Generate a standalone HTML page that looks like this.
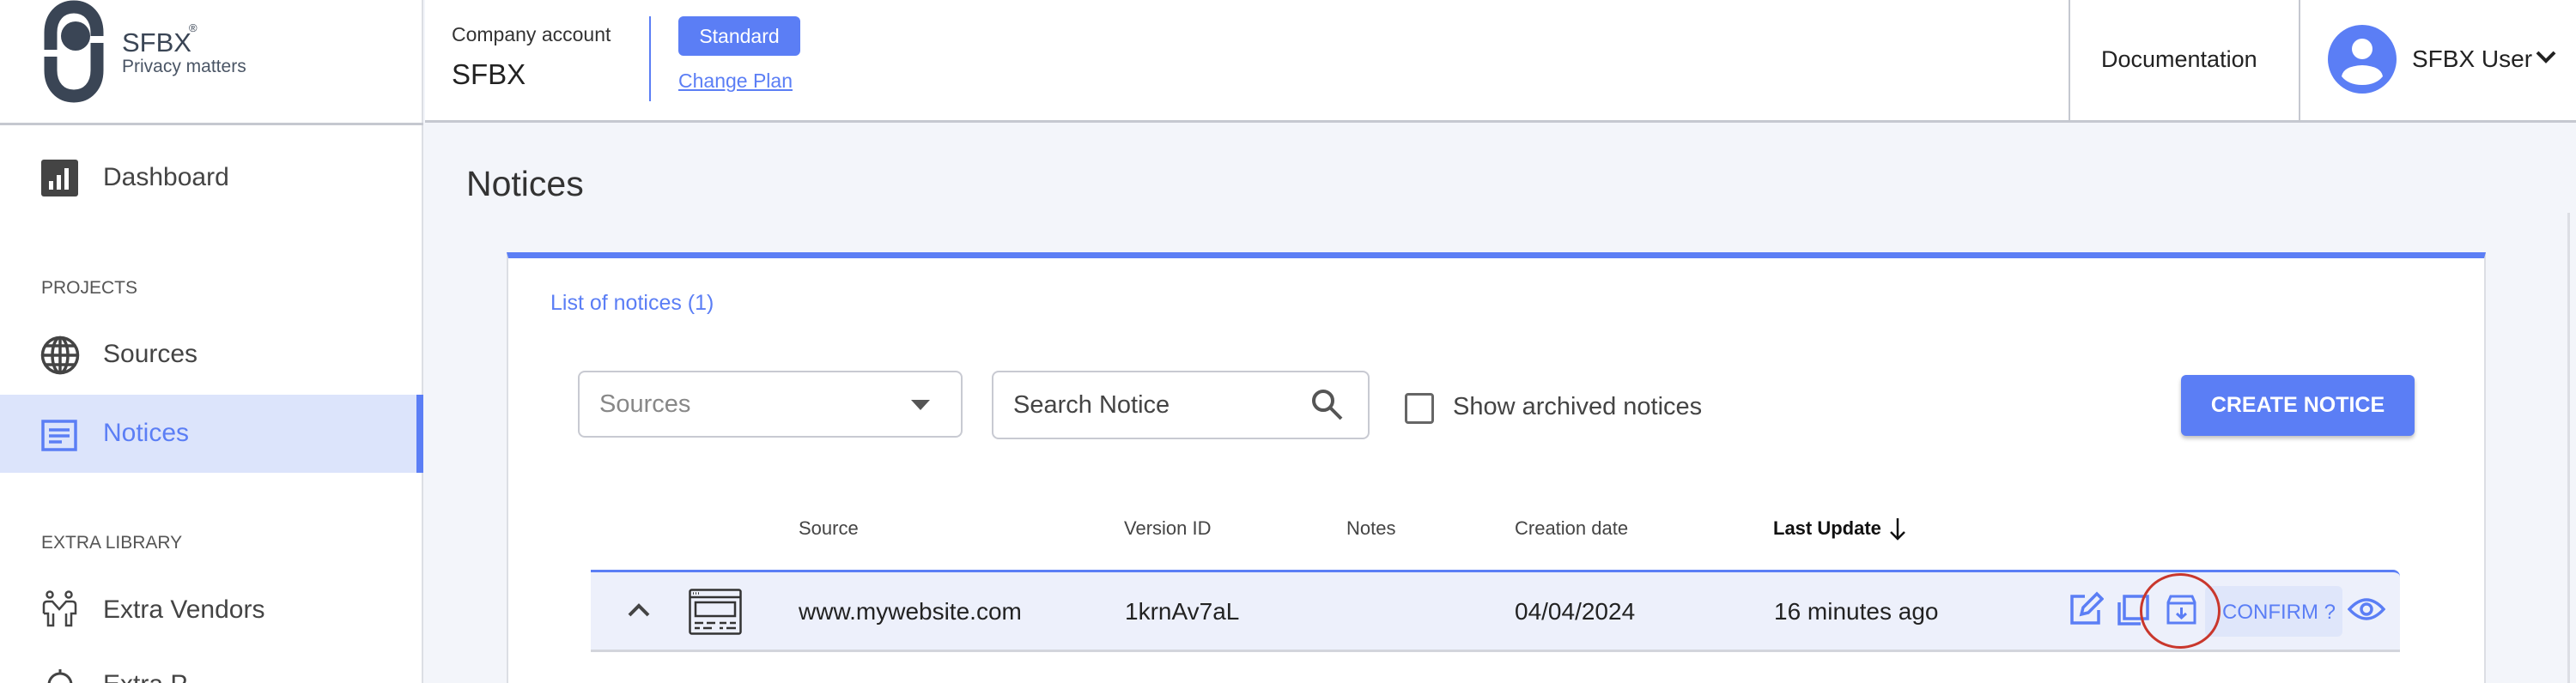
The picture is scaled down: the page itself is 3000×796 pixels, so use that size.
<!DOCTYPE html>
<html><head><meta charset="utf-8"><style>
*{margin:0;padding:0;box-sizing:border-box}
html,body{width:3000px;height:796px;overflow:hidden}
body{background:#f3f5fa;font-family:"Liberation Sans",sans-serif;color:#3c3c3c;position:relative}
.abs{position:absolute}
.t{position:absolute;white-space:nowrap;line-height:1}
</style></head><body>
<!-- sidebar -->
<div class="abs" style="left:0;top:0;width:493px;height:796px;background:#fff;border-right:2px solid #dcdee4"></div>
<div class="abs" style="left:0;top:143px;width:493px;height:3px;background:#c5c8d0"></div>
<!-- logo -->
<svg class="abs" style="left:48px;top:0" width="76" height="120" viewBox="0 0 76 120" fill="none" stroke="#3a4555" stroke-width="15">
<path d="M11 58 L11 38 C11 20 22 8 38 8 C54 8 65 20 65 38 L65 42"/>
<path d="M65 50 L65 82 C65 100 54 112 38 112 C22 112 11 100 11 82 L11 66"/>
<circle cx="40" cy="42" r="17" fill="#3a4555" stroke="none"/>
</svg>
<div class="t" style="left:142px;top:34px;font-size:31px;color:#3a4555">SFBX</div>
<div class="t" style="left:220px;top:26px;font-size:13px;color:#3a4555">®</div>
<div class="t" style="left:142px;top:67px;font-size:21px;color:#4a5565">Privacy matters</div>

<!-- dashboard -->
<div class="abs" style="left:48px;top:186px;width:43px;height:43px;background:#444;border-radius:3px"></div>
<div class="abs" style="left:57px;top:211px;width:5px;height:10px;background:#fff"></div>
<div class="abs" style="left:66px;top:204px;width:5px;height:17px;background:#fff"></div>
<div class="abs" style="left:75px;top:196px;width:5px;height:25px;background:#fff"></div>
<div class="t" style="left:120px;top:192px;font-size:30px;color:#444">Dashboard</div>
<div class="t" style="left:48px;top:325px;font-size:21px;color:#555">PROJECTS</div>
<svg class="abs" style="left:47px;top:391px" width="46" height="46" viewBox="0 0 46 46" fill="none" stroke="#444" stroke-width="3.5">
<circle cx="23" cy="23" r="20.5"/><ellipse cx="23" cy="23" rx="9" ry="20.5"/><line x1="23" y1="2" x2="23" y2="44"/><line x1="2.5" y1="23" x2="43.5" y2="23"/><path d="M6 12H40M6 34H40"/></svg>
<div class="t" style="left:120px;top:398px;font-size:30px;color:#444">Sources</div>
<div class="abs" style="left:0;top:460px;width:493px;height:91px;background:#dce4fb;border-right:8px solid #5b7ef5"></div>
<svg class="abs" style="left:48px;top:489px" width="42" height="37" viewBox="0 0 42 37" fill="none" stroke="#5b7ef5" stroke-width="3.5">
<rect x="2" y="2" width="38" height="33"/><path d="M9 12H33M9 19H33M9 26H24"/></svg>
<div class="t" style="left:120px;top:490px;font-size:30px;color:#5b7ef5">Notices</div>
<div class="t" style="left:48px;top:622px;font-size:21px;color:#555">EXTRA LIBRARY</div>
<svg class="abs" style="left:48px;top:688px" width="44" height="46" viewBox="0 0 44 46" fill="none" stroke="#444" stroke-width="2.5">
<circle cx="10" cy="5" r="3.5"/><circle cx="32" cy="5" r="3.5"/>
<path d="M3 27 L3 17 Q3 13 7 13 L13 13 L21 22 L29 13 L36 13 Q40 13 40 17 L40 27 L35 27 L35 41 L29 41 L29 27 M14 27 L14 41 L8 41 L8 27 L3 27"/></svg>
<div class="t" style="left:120px;top:696px;font-size:30px;color:#444">Extra Vendors</div>
<svg class="abs" style="left:52px;top:780px" width="36" height="16" viewBox="0 0 36 16" fill="none" stroke="#444" stroke-width="3"><circle cx="18" cy="18" r="13"/><line x1="18" y1="0" x2="18" y2="5"/></svg>
<div class="t" style="left:120px;top:783px;font-size:30px;color:#444">Extra P</div>

<!-- header -->
<div class="abs" style="left:495px;top:0;width:2505px;height:143px;background:#fff;border-bottom:3px solid #c5c8d0"></div>
<div class="t" style="left:526px;top:29px;font-size:23px;color:#333">Company account</div>
<div class="t" style="left:526px;top:70px;font-size:33px;color:#222">SFBX</div>
<div class="abs" style="left:756px;top:19px;width:2px;height:99px;background:#5b7ef5"></div>
<div class="abs" style="left:790px;top:19px;width:142px;height:46px;background:#5b7ef5;border-radius:6px;color:#fff;font-size:23px;text-align:center;line-height:46px">Standard</div>
<div class="t" style="left:790px;top:83px;font-size:23px;color:#5b7ef5;text-decoration:underline">Change Plan</div>
<div class="abs" style="left:2409px;top:0;width:2px;height:143px;background:#c5c8d0"></div>
<div class="abs" style="left:2677px;top:0;width:2px;height:143px;background:#c5c8d0"></div>
<div class="t" style="left:2447px;top:56px;font-size:27px;color:#222">Documentation</div>
<svg class="abs" style="left:2711px;top:29px" width="80" height="80" viewBox="0 0 80 80">
<circle cx="40" cy="40" r="40" fill="#5b7ef5"/><circle cx="40" cy="28" r="12" fill="#fff"/><path d="M16 60 Q18 48 40 47 Q62 48 64 60 Q56 70 40 70 Q24 70 16 60Z" fill="#fff"/></svg>
<div class="t" style="left:2809px;top:55px;font-size:28px;color:#222">SFBX User</div>
<svg class="abs" style="left:2953px;top:59px" width="24" height="16" viewBox="0 0 24 16" fill="none" stroke="#222" stroke-width="4"><path d="M2 2L12 12L22 2"/></svg>

<!-- main -->
<div class="t" style="left:543px;top:194px;font-size:41px;color:#333">Notices</div>
<div class="abs" style="left:2990px;top:248px;width:3px;height:548px;background:#dcdee4"></div>
<div class="abs" style="left:590px;top:294px;width:2305px;height:502px;background:#fff;border-left:2px solid #dcdee4;border-right:2px solid #dcdee4;border-top:7px solid #5b7ef5"></div>
<div class="t" style="left:641px;top:341px;font-size:25px;color:#5b7ef5">List of notices (1)</div>

<div class="abs" style="left:673px;top:432px;width:448px;height:78px;border:2px solid #c8cad2;border-radius:8px;background:#fff"></div>
<div class="t" style="left:698px;top:457px;font-size:29px;color:#888">Sources</div>
<svg class="abs" style="left:1061px;top:466px" width="22" height="12"><path d="M0 0H22L11 12Z" fill="#555"/></svg>
<div class="abs" style="left:1155px;top:432px;width:440px;height:80px;border:2px solid #c8cad2;border-radius:8px;background:#fff"></div>
<div class="t" style="left:1180px;top:458px;font-size:29px;color:#444">Search Notice</div>
<svg class="abs" style="left:1526px;top:452px" width="40" height="40" viewBox="0 0 40 40" fill="none" stroke="#555" stroke-width="4"><circle cx="15" cy="15" r="11"/><path d="M23 23L36 36"/></svg>
<div class="abs" style="left:1636px;top:458px;width:34px;height:36px;border:3.5px solid #666;border-radius:4px"></div>
<div class="t" style="left:1692px;top:460px;font-size:29px;color:#444">Show archived notices</div>
<div class="abs" style="left:2540px;top:437px;width:272px;height:71px;background:#5b7ef5;border-radius:6px;box-shadow:0 3px 5px rgba(0,0,0,.25);color:#fff;font-weight:bold;font-size:25px;text-align:center;line-height:71px">CREATE NOTICE</div>

<div class="t" style="left:930px;top:605px;font-size:22px;color:#444">Source</div>
<div class="t" style="left:1309px;top:605px;font-size:22px;color:#444">Version ID</div>
<div class="t" style="left:1568px;top:605px;font-size:22px;color:#444">Notes</div>
<div class="t" style="left:1764px;top:605px;font-size:22px;color:#444">Creation date</div>
<div class="t" style="left:2065px;top:605px;font-size:22px;color:#111;font-weight:bold">Last Update</div>
<svg class="abs" style="left:2200px;top:604px" width="20" height="26" viewBox="0 0 20 26" fill="none" stroke="#111" stroke-width="2.5"><path d="M10 0V24M2 16L10 24L18 16"/></svg>

<div class="abs" style="left:688px;top:664px;width:2107px;height:96px;background:#edf0fb;border-top:3px solid #5b7ef5;border-bottom:3px solid #d3d5dc;border-top-right-radius:8px"></div>
<svg class="abs" style="left:731px;top:703px" width="26" height="16" viewBox="0 0 26 16" fill="none" stroke="#444" stroke-width="4"><path d="M2 14L13 3L24 14"/></svg>
<svg class="abs" style="left:802px;top:686px" width="62" height="54" viewBox="0 0 62 54" fill="none" stroke="#333" stroke-width="2.5">
<rect x="1.5" y="1.5" width="59" height="51" rx="2"/><line x1="1.5" y1="10" x2="60.5" y2="10"/><rect x="8" y="16" width="46" height="16"/><path d="M7 40H17M21 40H31M36 40H44M48 40H55M7 46H13M17 46H27M36 46H40M44 46H55"/><path d="M5 5.5H6M8 5.5H9M11 5.5H12"/></svg>
<div class="t" style="left:930px;top:699px;font-size:28px;color:#222">www.mywebsite.com</div>
<div class="t" style="left:1310px;top:699px;font-size:28px;color:#222">1krnAv7aL</div>
<div class="t" style="left:1764px;top:699px;font-size:28px;color:#222">04/04/2024</div>
<div class="t" style="left:2066px;top:699px;font-size:28px;color:#222">16 minutes ago</div>

<svg class="abs" style="left:2410px;top:689px" width="40" height="40" viewBox="0 0 40 40" fill="none" stroke="#5b7ef5" stroke-width="3.5"><path d="M18 6H3V37H34V22"/><path d="M14 27L16 19L32 3L38 9L22 25Z"/></svg>
<svg class="abs" style="left:2465px;top:692px" width="38" height="38" viewBox="0 0 38 38" fill="none" stroke="#5b7ef5" stroke-width="3.5"><path d="M3 10V35H28"/><rect x="9" y="3" width="27" height="26"/></svg>
<svg class="abs" style="left:2523px;top:693px" width="35" height="35" viewBox="0 0 35 35" fill="none" stroke="#5b7ef5" stroke-width="3"><path d="M5 2H30L33 9V33H2V9Z"/><path d="M2 10H33"/><path d="M17.5 15V27M12 22L17.5 27L23 22"/></svg>
<div class="abs" style="left:2568px;top:683px;width:160px;height:59px;background:#dfe6fa;border-radius:6px"></div>
<div class="t" style="left:2588px;top:702px;font-size:24px;color:#5b7ef5">CONFIRM ?</div>
<svg class="abs" style="left:2734px;top:696px" width="44" height="28" viewBox="0 0 44 28" fill="none" stroke="#5b7ef5" stroke-width="3.5"><path d="M2 14Q22 -8 42 14Q22 36 2 14Z"/><circle cx="22" cy="14" r="6"/></svg>
<div class="abs" style="left:2492px;top:668px;width:94px;height:88px;border:3.5px solid #c9372c;border-radius:50%"></div>
</body></html>
